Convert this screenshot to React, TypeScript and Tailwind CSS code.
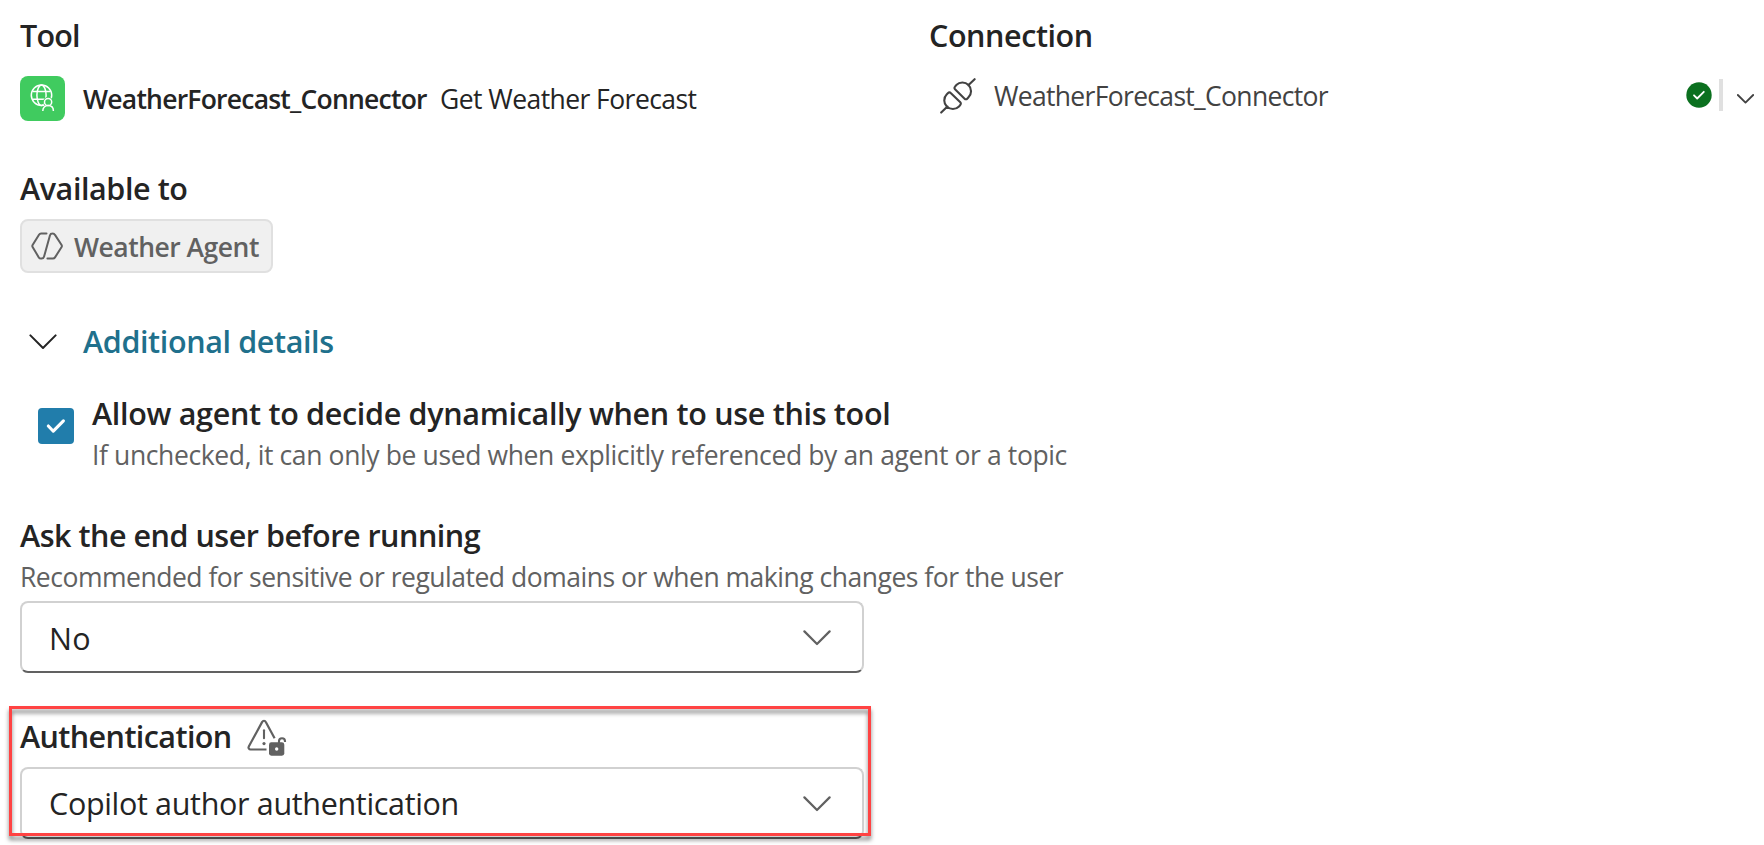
import type { ReactNode } from "react";

function Heading({ children, className = "" }: { children: ReactNode; className?: string }) {
  return (
    <h2 className={`text-[30.5px] leading-10 font-semibold whitespace-nowrap ${className}`}>{children}</h2>
  );
}

function Chevron({ className = "" }: { className?: string }) {
  return (
    <svg
      viewBox="0 0 28 16"
      fill="none"
      stroke="currentColor"
      strokeLinecap="round"
      strokeLinejoin="round"
      className={className}
    >
      <path d="M1.4 1.4 14 14 26.6 1.4" />
    </svg>
  );
}

function ConnectorIcon() {
  return (
    <div className="flex size-[45px] shrink-0 rounded-lg bg-[#40cb5f]">
      <svg viewBox="0 0 45 45" className="size-[45px]" fill="none" stroke="#fff" strokeWidth="1.5">
        <circle cx="21.5" cy="19.3" r="10.2" />
        <ellipse cx="21.5" cy="19.3" rx="4.6" ry="10.2" />
        <path d="M12.3 15.4h18.4M12.3 23.2h18.4" />
        <path d="M21.7 36.5c0-4 2.6-6.4 6.4-6.4s6.4 2.4 6.4 6.4Z" fill="#40cb5f" stroke="#40cb5f" />
        <circle cx="28.1" cy="26" r="5" fill="#40cb5f" stroke="none" />
        <circle cx="28.1" cy="26" r="3.6" />
        <path d="M22.8 35c0-3.4 2.2-5.4 5.3-5.4s5.3 2 5.3 5.4" />
      </svg>
    </div>
  );
}

function AgentIcon() {
  return (
    <svg
      viewBox="0 0 32 28"
      className="h-7 w-8 shrink-0"
      fill="none"
      stroke="currentColor"
      strokeWidth="2"
      strokeLinecap="round"
      strokeLinejoin="round"
    >
      <path d="M15.5 1.5H10.2A2.5 2.5 0 0 0 8 2.7L1.6 13a2 2 0 0 0 0 2l6.2 10.4A2.5 2.5 0 0 0 10 26.6h.6a2.5 2.5 0 0 0 2.4-1.8L19 3.2a2.5 2.5 0 0 1 2.4-1.7A2.8 2.8 0 0 1 24 2.9L30.6 13a2 2 0 0 1 0 2L24 25.4a2.5 2.5 0 0 1-2.2 1.2H16.4" />
    </svg>
  );
}

function PlugIcon() {
  return (
    <svg
      viewBox="0 0 36 36"
      className="size-9 shrink-0"
      fill="none"
      stroke="currentColor"
      strokeWidth="2.1"
      strokeLinecap="round"
      strokeLinejoin="round"
    >
      <path d="M34.6 1.2 28.3 7.3M15 11.3l9.6 9.4a1.8 1.8 0 0 0 2.6 0l1.3-1.4A8.6 8.6 0 0 0 16.3 7.1L15 8.7a1.8 1.8 0 0 0 0 2.6Z" />
      <path d="M1.2 34.6 7.4 28.5M20.3 24.3 10.7 14.9a1.8 1.8 0 0 0-2.6 0l-1.3 1.4A8.6 8.6 0 0 0 19 28.5l1.3-1.6a1.8 1.8 0 0 0 0-2.6Z" />
    </svg>
  );
}

function UnlockedWarningIcon() {
  return (
    <svg viewBox="0 0 42 42" className="mt-1 size-[42px] shrink-0 text-[#616161]" fill="none" stroke="currentColor">
      <path
        d="M20.5 32.5H4.6a2 2 0 0 1-1.8-3L16.2 4.9a2 2 0 0 1 3.6 0L28.6 21.2"
        strokeWidth="2.2"
        strokeLinecap="butt"
      />
      <path d="M18 13.2v8" strokeWidth="2.1" strokeLinecap="round" />
      <circle cx="18" cy="26.6" r="1.6" fill="currentColor" stroke="none" />
      <rect x="23" y="25.3" width="15.3" height="13.4" rx="2.4" fill="currentColor" stroke="none" />
      <path d="M33 26v-1.8a3 3 0 0 1 6 0v.8" strokeWidth="2.1" />
      <circle cx="30.7" cy="32" r="1.7" fill="#fff" stroke="none" />
    </svg>
  );
}

function Select({ value, className }: { value: string; className: string }) {
  return (
    <button className="flex h-[72px] w-[844px] items-center justify-between overflow-hidden rounded-lg border-2 border-[#d1d1d1] border-b-[#616161] bg-white pr-[31px] pl-[27px]">
      <span className={`text-[30.5px] leading-10 ${className}`}>{value}</span>
      <Chevron className="mt-0.5 h-4 w-7 stroke-[2.2px] text-[#616161]" />
    </button>
  );
}

export default function App() {
  return (
    <main className="relative h-[845px] w-[1764px] overflow-hidden bg-white pt-[15px] pl-5 font-['Open_Sans','Noto_Sans',sans-serif] text-[#242424]">
      <div className="grid grid-cols-[909px_1fr]">
        <section>
          <Heading className="tracking-[-0.8px]">Tool</Heading>
          <div className="mt-[21px] flex h-[45px] items-center text-[26.5px] whitespace-nowrap">
            <ConnectorIcon />
            <span className="ml-[18px] w-[357px] pt-0.5 font-semibold tracking-[-0.77px]">
              WeatherForecast_Connector
            </span>
            <span className="pt-0.5 tracking-[-0.56px]">Get Weather Forecast</span>
          </div>
        </section>
        <section>
          <Heading className="tracking-[-0.42px]">Connection</Heading>
          <div className="mt-[21px] flex h-10 items-center pl-[11px] text-[26.5px] text-[#424242]">
            <PlugIcon />
            <span className="ml-[18px] pt-0.5 tracking-[-0.68px]">WeatherForecast_Connector</span>
            <div className="ml-auto flex items-center pr-[10px]">
              <svg viewBox="0 0 26 26" className="mb-0.5 size-[26px]" fill="none">
                <circle cx="13" cy="13" r="12.7" fill="#0b701f" />
                <path
                  d="m8 13.3 3.2 3.2 6.6-6.7"
                  stroke="#fff"
                  strokeWidth="1.8"
                  strokeLinecap="round"
                  strokeLinejoin="round"
                />
              </svg>
              <div className="mb-0.5 ml-[7px] h-8 w-1 bg-[#e0e0e0]" />
              <Chevron className="mt-[5px] ml-[14px] h-[10px] w-[17px] stroke-[3px]" />
            </div>
          </div>
        </section>
      </div>

      <Heading className="mt-[47px] tracking-[-0.42px]">Available to</Heading>
      <div className="mt-[11px] flex h-[54px] w-[253px] items-center rounded-lg border-2 border-[#e0e0e0] bg-[#f0f0f0] pl-[9px] text-[#616161]">
        <AgentIcon />
        <span className="ml-[11px] pt-0.5 text-[26.5px] leading-9 font-semibold tracking-[-0.5px] whitespace-nowrap">
          Weather Agent
        </span>
      </div>

      <div className="mt-12 flex items-center">
        <Chevron className="mt-0.5 ml-[8.5px] h-4 w-7 stroke-2" />
        <Heading className="ml-[26.5px] tracking-[-0.38px] text-[#20708c]">Additional details</Heading>
      </div>

      <div className="mt-8 flex pl-[18px]">
        <div className="mt-[15px] flex size-9 shrink-0 items-center justify-center rounded bg-[#217dab]">
          <svg
            viewBox="0 0 20 16"
            className="h-4 w-5"
            fill="none"
            stroke="#fff"
            strokeWidth="3.1"
            strokeLinecap="round"
            strokeLinejoin="round"
          >
            <path d="m2.3 8 5 5.2L17.4 2.8" />
          </svg>
        </div>
        <div className="ml-[18px]">
          <Heading className="tracking-[-0.31px]">Allow agent to decide dynamically when to use this tool</Heading>
          <p className="mt-1 text-[26.5px] leading-9 tracking-[-0.38px] whitespace-nowrap text-[#616161]">
            If unchecked, it can only be used when explicitly referenced by an agent or a topic
          </p>
        </div>
      </div>

      <Heading className="mt-[42px] tracking-[-0.48px]">Ask the end user before running</Heading>
      <p className="mt-1 mb-1.5 text-[26.5px] leading-9 tracking-[-0.485px] whitespace-nowrap text-[#616161]">
        Recommended for sensitive or regulated domains or when making changes for the user
      </p>
      <Select value="No" className="pt-0.5 tracking-[0.3px]" />

      <div className="mt-[43px] mb-[11px] flex h-10 items-center">
        <Heading className="w-[226px] tracking-[-0.59px]">Authentication</Heading>
        <UnlockedWarningIcon />
      </div>
      <Select value="Copilot author authentication" className="tracking-[-0.33px]" />

      <div className="pointer-events-none absolute top-[706px] left-[9px] h-[130px] w-[862px] border-3 border-[#ff4343] drop-shadow-[0_4px_2px_rgba(0,0,0,0.5)]" />
    </main>
  );
}
